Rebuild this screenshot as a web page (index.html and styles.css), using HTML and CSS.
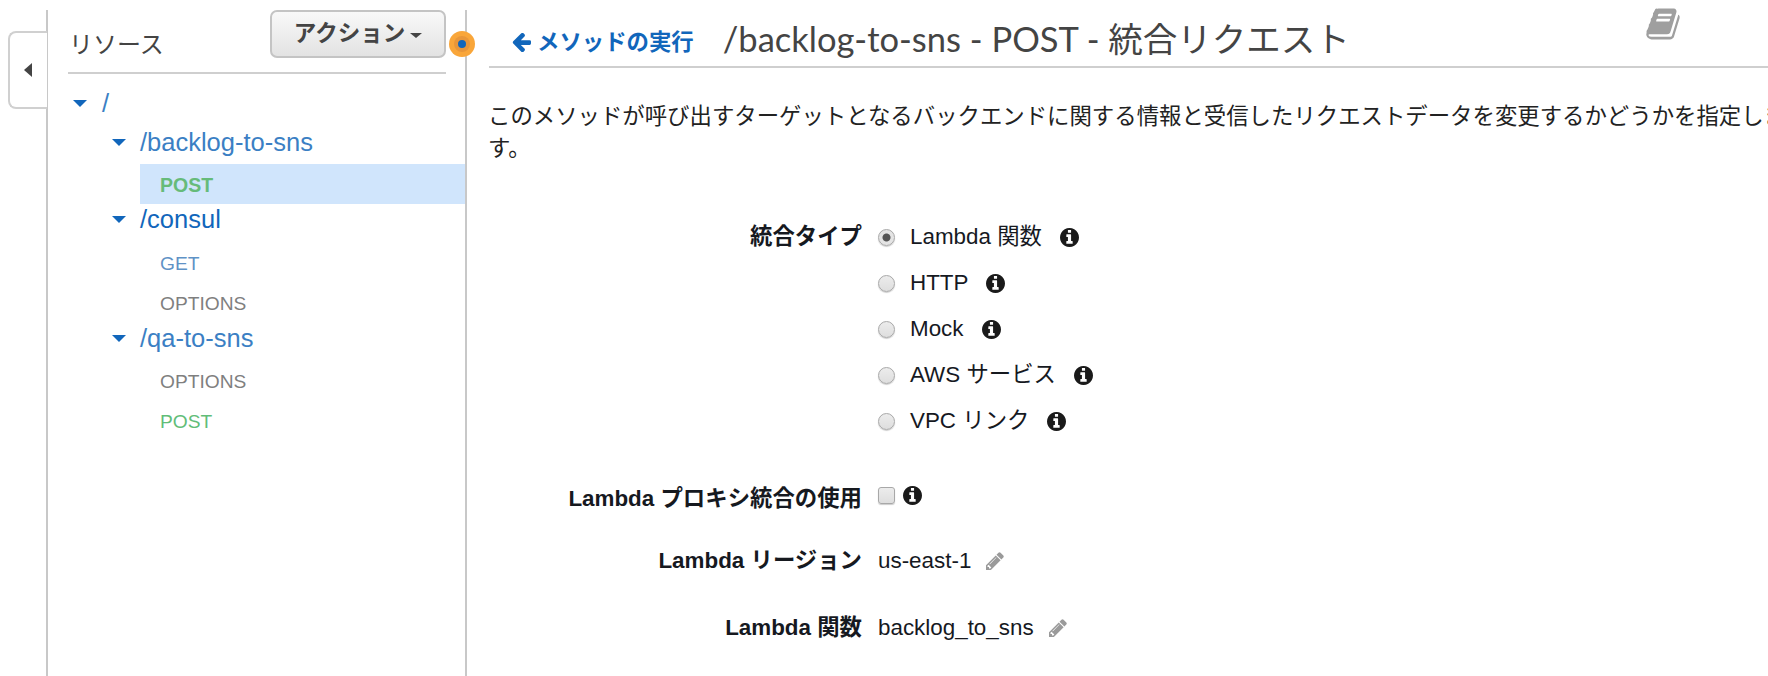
FILE: index.html
```html
<!DOCTYPE html>
<html lang="ja">
<head>
  <meta charset="UTF-8">
  <title>統合リクエスト</title>
  <link rel="stylesheet" href="styles.css">
</head>
<body>
  <svg class="defs" width="0" height="0">
    <symbol id="i-info" viewBox="128 128 1536 1536"><path d="M1152 1376v-160q0-14-9-23t-23-9h-96v-512q0-14-9-23t-23-9h-320q-14 0-23 9t-9 23v160q0 14 9 23t23 9h96v320h-96q-14 0-23 9t-9 23v160q0 14 9 23t23 9h448q14 0 23-9t9-23zm-128-896v-160q0-14-9-23t-23-9h-192q-14 0-23 9t-9 23v160q0 14 9 23t23 9h192q14 0 23-9t9-23zm640 416q0 209-103 385.5t-279.5 279.5-385.5 103-385.5-103-279.5-279.5-103-385.5 103-385.5 279.5-279.5 385.5-103 385.5 103 279.5 279.5 103 385.5z"/></symbol>
    <symbol id="i-pencil" viewBox="128 128 1536 1536"><path d="M491 1536l91-91-235-235-91 91v107h128v128h107zm523-928q0-22-22-22-10 0-17 7l-542 542q-7 7-7 17 0 22 22 22 10 0 17-7l542-542q7-7 7-17zm-54-192l416 416-832 832h-416v-416zm683 96q0 53-37 90l-166 166-416-416 166-165q36-38 90-38 53 0 91 38l235 234q37 39 37 91z"/></symbol>
  </svg>

  <div class="page">
    <aside class="sidebar">
      <div class="collapse-tab"><span class="tab-arrow"></span></div>
      <div class="side-head">
        <span class="side-title">リソース</span>
        <button class="action-btn">アクション<span class="caret"></span></button>
      </div>
      <span class="hotspot"><span class="hotspot-dot"></span></span>
      <ul class="tree">
        <li class="res res-root"><span class="twisty"></span><a>/</a></li>
        <li class="res res-a"><span class="twisty"></span><a>/backlog-to-sns</a></li>
        <li class="method selected post">POST</li>
        <li class="res res-b"><span class="twisty"></span><a class="dark">/consul</a></li>
        <li class="method m-get">GET</li>
        <li class="method m-opt">OPTIONS</li>
        <li class="res res-c"><span class="twisty"></span><a>/qa-to-sns</a></li>
        <li class="method m-opt2">OPTIONS</li>
        <li class="method m-post">POST</li>
      </ul>
    </aside>

    <main class="content">
      <header class="head">
        <a class="back">
          <svg class="back-arrow" viewBox="128 192 1536 1408"><path d="M1664 896v128q0 53-32.500 90.500t-84.500 37.500h-704l293 294q38 36 38 90t-38 90l-75 76q-37 37-90 37-52 0-91-37l-651-652q-37-37-37-90 0-52 37-91l651-650q38-38 91-38 52 0 90 38l75 74q38 38 38 91t-38 91l-293 293h704q52 0 84.500 37.500t32.500 90.500z" transform="translate(0 -64)"/></svg>メソッドの実行</a>
        <h1>/backlog-to-sns - POST - 統合リクエスト</h1>
        <svg class="book" viewBox="0 0 1792 1792"><path d="M1703 478q40 57 18 129l-275 906q-19 64-76.500 107.500t-122.500 43.500h-923q-77 0-148.500-53.500t-99.500-131.500q-24-67-2-127 0-4 3-27t4-37q1-8-3-21.500t-3-19.500q2-11 8-21t16.500-23.500 16.500-23.500q23-38 45-91.500t30-91.500q3-10 .5-30t-.5-28q3-11 17-28t17-23q21-36 42-92t25-90q1-9-2.500-32t.5-28q4-13 22-30.500t22-22.500q19-26 42.500-84.500t27.500-96.500q1-8-3-25.500t-2-26.500q2-8 9-18t18-23 17-21q8-12 16.500-30.500t15-35 16-36 19.500-32 26.500-23.500 36-11.500 47.500 5.500l-1 3q38-9 51-9h761q74 0 114 56t18 130l-274 906q-36 119-71.500 153.500t-128.500 34.500h-869q-27 0-38 15-11 16-1 43 24 70 144 70h923q29 0 56-15.500t35-41.500l300-987q7-22 5-57 38 15 59 43zm-1064 2q-4 13 2 22.500t20 9.500h608q13 0 25.500-9.500t16.500-22.500l21-64q4-13-2-22.500t-20-9.500h-608q-13 0-25.500 9.500t-16.500 22.500zm-83 256q-4 13 2 22.500t20 9.500h608q13 0 25.500-9.500t16.500-22.500l21-64q4-13-2-22.500t-20-9.500h-608q-13 0-25.500 9.500t-16.500 22.500z"/></svg>
      </header>

      <p class="desc">このメソッドが呼び出すターゲットとなるバックエンドに関する情報と受信したリクエストデータを変更するかどうかを指定します。</p>

      <div class="form">
        <div class="row row-type">
          <div class="label">統合タイプ</div>
          <div class="value options-list">
            <label class="opt"><input type="radio" name="t" checked>Lambda 関数<svg class="info gap"><use href="#i-info"/></svg></label>
            <label class="opt"><input type="radio" name="t">HTTP<svg class="info gap"><use href="#i-info"/></svg></label>
            <label class="opt"><input type="radio" name="t">Mock<svg class="info gap"><use href="#i-info"/></svg></label>
            <label class="opt"><input type="radio" name="t">AWS サービス<svg class="info gap"><use href="#i-info"/></svg></label>
            <label class="opt"><input type="radio" name="t">VPC リンク<svg class="info gap"><use href="#i-info"/></svg></label>
          </div>
        </div>
        <div class="row row-proxy">
          <div class="label">Lambda プロキシ統合の使用</div>
          <div class="value"><input type="checkbox"><svg class="info"><use href="#i-info"/></svg></div>
        </div>
        <div class="row row-region">
          <div class="label">Lambda リージョン</div>
          <div class="value">us-east-1<svg class="pencil"><use href="#i-pencil"/></svg></div>
        </div>
        <div class="row row-func">
          <div class="label">Lambda 関数</div>
          <div class="value">backlog_to_sns<svg class="pencil"><use href="#i-pencil"/></svg></div>
        </div>
      </div>
    </main>
  </div>
</body>
</html>
```

FILE: styles.css
```css
html, body {
  margin: 0;
  height: 100%;
  overflow: hidden;
  background: #fff;
}

body {
  font-family: "Liberation Sans", "Noto Sans CJK JP", sans-serif;
  color: #16191f;
}

.defs {
  position: absolute;
}

.page {
  display: flex;
  height: 666px;
  margin-top: 10px;
  width: 1850px;
}

/* left column */
.sidebar {
  position: relative;
  box-sizing: border-box;
  width: 421px;
  margin-left: 46px;
  border-left: 2px solid #c8c8c8;
  border-right: 2px solid #c8c8c8;
}

.collapse-tab {
  position: absolute;
  left: -40px;
  top: 21px;
  width: 39px;
  height: 78px;
  box-sizing: border-box;
  background: #fff;
  border: 2px solid #d0d0d0;
  border-right: none;
  border-radius: 8px 0 0 8px;
  display: flex;
  align-items: center;
  justify-content: center;
}

.tab-arrow {
  width: 0;
  height: 0;
  border-style: solid;
  border-width: 7px 8px 7px 0;
  border-color: transparent #444 transparent transparent;
  margin-right: 2px;
}

.side-head {
  box-sizing: border-box;
  width: 378px;
  height: 64px;
  margin-left: 20px;
  border-bottom: 2px solid #cfcfcf;
  display: flex;
  justify-content: space-between;
  align-items: flex-start;
}

.side-title {
  font-size: 24px;
  color: #444;
  margin: 19px 0 0 1px;
  line-height: 32px;
}

.action-btn {
  width: 176px;
  height: 48px;
  padding: 0 0 6px;
  border: 2px solid #c4c4c4;
  border-radius: 7px;
  background: linear-gradient(#f9f9f9, #e3e3e3);
  font-family: inherit;
  font-size: 22.5px;
  font-weight: bold;
  color: #444;
  white-space: nowrap;
}

.caret {
  display: inline-block;
  width: 0;
  height: 0;
  margin-left: 5px;
  vertical-align: middle;
  border-style: solid;
  border-width: 5px 6px 0;
  border-color: #444 transparent transparent;
}

.hotspot {
  position: absolute;
  right: -10px;
  top: 21px;
  width: 26px;
  height: 26px;
  border-radius: 50%;
  background: #f9a63a;
  display: flex;
  align-items: center;
  justify-content: center;
  box-sizing: border-box;
}

.hotspot-dot {
  width: 8px;
  height: 8px;
  border-radius: 50%;
  background: #1166bb;
  box-shadow: 0 0 0 4px #e8963a;
}

.tree {
  list-style: none;
  margin: 0;
  padding: 0;
  font-size: 25.5px;
}

.res {
  display: flex;
  align-items: center;
  height: 34px;
}

.res a {
  color: #3b7fc4;
}

.res a.dark {
  color: #1166bb;
}

.twisty {
  width: 0;
  height: 0;
  border-style: solid;
  border-width: 7px 7px 0;
  border-color: #1166bb transparent transparent;
  margin-right: 14px;
}

.res-root {
  padding-left: 25px;
  margin-top: 12px;
}

.res-root .twisty {
  margin-right: 15px;
}

.res-a,
.res-b,
.res-c {
  padding-left: 64px;
}

.res-a {
  margin-top: 5px;
}

.method {
  height: 40px;
  line-height: 40px;
  font-size: 19.2px;
  margin-left: 92px;
  padding-left: 20px;
}

.selected {
  background: #d0e5fc;
  margin-top: 5px;
  font-size: 19.5px;
  line-height: 42px;
  font-weight: bold;
  color: #66bb7a;
}

.res-b {
  margin-top: -2px;
}

.m-get {
  color: #5f92c6;
  margin-top: 8px;
}

.m-opt {
  color: #7f7f7f;
}

.res-c {
  margin-top: -3px;
}

.m-opt2 {
  color: #7f7f7f;
  margin-top: 7px;
}

.m-post {
  color: #61bd78;
}

/* right column */
.content {
  flex: 1;
  padding-left: 22px;
}

.head {
  position: relative;
  box-sizing: border-box;
  height: 58px;
  border-bottom: 2px solid #cfcfcf;
  display: flex;
  align-items: flex-start;
}

.back {
  display: flex;
  align-items: center;
  margin: 18px 0 0 23px;
  font-family: "Lato", "Noto Sans CJK JP", sans-serif;
  font-size: 22.4px;
  font-weight: bold;
  line-height: 28px;
  color: #1166bb;
  white-space: nowrap;
}

.back-arrow {
  width: 19px;
  height: 19px;
  margin-right: 6px;
  fill: #1166bb;
}

h1 {
  margin: 6px 0 0 29px;
  font-family: "Lato", "Noto Sans CJK JP", sans-serif;
  font-size: 34.5px;
  line-height: 46px;
  font-weight: normal;
  color: #444;
  white-space: nowrap;
}

.book {
  position: absolute;
  left: 1156px;
  top: -4px;
  width: 36px;
  height: 36px;
  fill: #9f9f9f;
}

.desc {
  width: 1305px;
  margin: 33px 0 0 -1px;
  font-size: 22.4px;
  line-height: 32px;
  color: #222;
}

.form {
  margin-top: 59px;
  font-size: 22.4px;
}

.row {
  display: flex;
  align-items: flex-start;
}

.label {
  width: 373px;
  text-align: right;
  font-weight: bold;
  line-height: 26px;
  white-space: nowrap;
}

.value {
  display: flex;
  align-items: center;
  margin-left: 16px;
  line-height: 26px;
}

.options-list {
  flex-direction: column;
  align-items: flex-start;
  gap: 20px;
}

.opt {
  display: flex;
  align-items: center;
  height: 26px;
}

input[type="radio"],
input[type="checkbox"] {
  appearance: none;
  box-sizing: border-box;
  width: 17px;
  height: 17px;
  margin: 0;
  border: 1px solid #a8a8a8;
  background: linear-gradient(#ececec, #dedede);
  box-shadow: 0 1px 1px rgba(0, 0, 0, 0.2);
}

input[type="radio"] {
  border-radius: 50%;
  margin-right: 15px;
}

input[type="radio"]:checked {
  background: radial-gradient(circle, #555 0 3.5px, #e4e4e4 4.5px);
}

input[type="checkbox"] {
  border-radius: 3px;
  margin-right: 8px;
}

.info {
  width: 19px;
  height: 19px;
  fill: #1a1a1a;
}

.info.gap {
  margin-left: 18px;
}

.pencil {
  width: 18px;
  height: 18px;
  margin-left: 15px;
  fill: #9a9a9a;
}

.row-proxy {
  margin-top: 52px;
}

.row-region {
  margin-top: 36px;
}

.row-func {
  margin-top: 41px;
}
```
